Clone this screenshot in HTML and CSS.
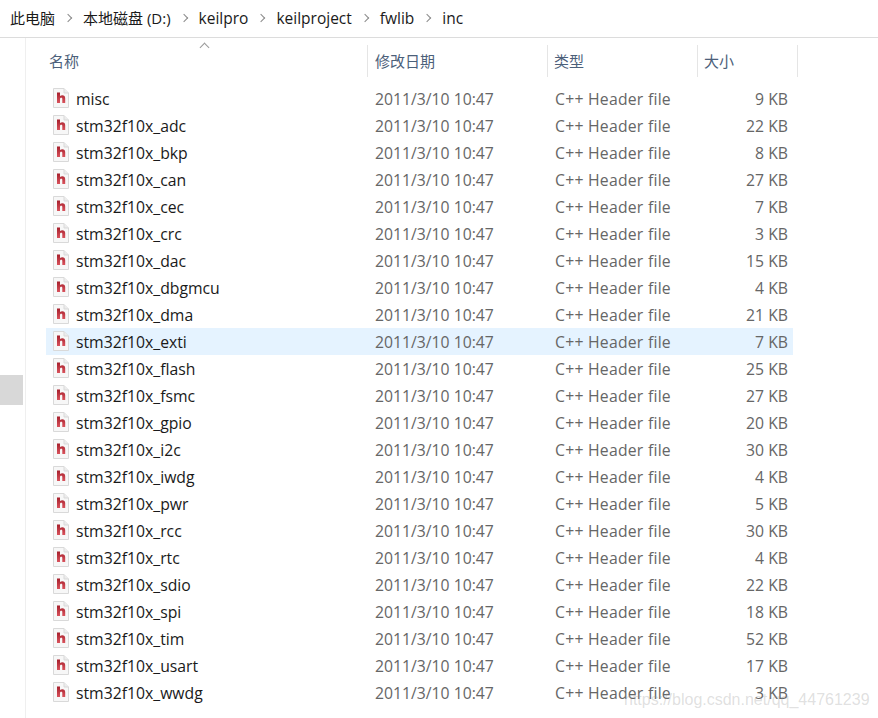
FILE: index.html
```html
<!DOCTYPE html>
<html lang="zh-CN">
<head>
    <meta charset="UTF-8">
    <title>inc</title>
    <link rel="stylesheet" href="styles.css">
</head>
<body>
    <svg class="defs" width="0" height="0">
        <defs>
            <linearGradient id="h-red" x1="0" y1="0" x2="0" y2="1">
                <stop offset="0" stop-color="#a51f2b"/>
                <stop offset="1" stop-color="#d9525c"/>
            </linearGradient>
        </defs>
        <symbol id="h-file" viewBox="0 0 16 20">
            <path d="M.5.5H11L15.5 5V19.5H.5Z" fill="#f7f7f7" stroke="#d9d9d9"/>
            <path d="M11 .5V5H15.5" fill="#ececec" stroke="#d9d9d9"/>
            <path d="M4 4.5H7V8C7.7 7.5 8.4 7.2 9.3 7.2 11.2 7.2 12.2 8.4 12.2 10.3V15H9.3V11C9.3 10.2 9 9.8 8.3 9.8 7.6 9.8 7 10.3 7 11.1V15H4Z" fill="url(#h-red)"/>
        </symbol>
    </svg>

    <nav class="breadcrumb">
        <span class="crumb crumb-cjk">此电脑</span><span class="chev"></span>
        <span class="crumb crumb-cjk">本地磁盘 (D:)</span><span class="chev"></span>
        <span class="crumb">keilpro</span><span class="chev"></span>
        <span class="crumb">keilproject</span><span class="chev"></span>
        <span class="crumb">fwlib</span><span class="chev"></span>
        <span class="crumb">inc</span>
    </nav>

    <div class="main">
        <div class="nav-pane"><div class="thumb"></div></div>
        <div class="files">
            <div class="head">
                <div class="col col-name">名称<span class="sort"></span></div>
                <div class="col col-date">修改日期</div>
                <div class="col col-type">类型</div>
                <div class="col col-size">大小</div>
            </div>
            <div class="rows">
                <div class="row"><svg class="icon"><use href="#h-file"/></svg><span class="name">misc</span><span class="date">2011/3/10 10:47</span><span class="type">C++ Header file</span><span class="size">9 KB</span></div>
                <div class="row"><svg class="icon"><use href="#h-file"/></svg><span class="name">stm32f10x_adc</span><span class="date">2011/3/10 10:47</span><span class="type">C++ Header file</span><span class="size">22 KB</span></div>
                <div class="row"><svg class="icon"><use href="#h-file"/></svg><span class="name">stm32f10x_bkp</span><span class="date">2011/3/10 10:47</span><span class="type">C++ Header file</span><span class="size">8 KB</span></div>
                <div class="row"><svg class="icon"><use href="#h-file"/></svg><span class="name">stm32f10x_can</span><span class="date">2011/3/10 10:47</span><span class="type">C++ Header file</span><span class="size">27 KB</span></div>
                <div class="row"><svg class="icon"><use href="#h-file"/></svg><span class="name">stm32f10x_cec</span><span class="date">2011/3/10 10:47</span><span class="type">C++ Header file</span><span class="size">7 KB</span></div>
                <div class="row"><svg class="icon"><use href="#h-file"/></svg><span class="name">stm32f10x_crc</span><span class="date">2011/3/10 10:47</span><span class="type">C++ Header file</span><span class="size">3 KB</span></div>
                <div class="row"><svg class="icon"><use href="#h-file"/></svg><span class="name">stm32f10x_dac</span><span class="date">2011/3/10 10:47</span><span class="type">C++ Header file</span><span class="size">15 KB</span></div>
                <div class="row"><svg class="icon"><use href="#h-file"/></svg><span class="name">stm32f10x_dbgmcu</span><span class="date">2011/3/10 10:47</span><span class="type">C++ Header file</span><span class="size">4 KB</span></div>
                <div class="row"><svg class="icon"><use href="#h-file"/></svg><span class="name">stm32f10x_dma</span><span class="date">2011/3/10 10:47</span><span class="type">C++ Header file</span><span class="size">21 KB</span></div>
                <div class="row hover"><svg class="icon"><use href="#h-file"/></svg><span class="name">stm32f10x_exti</span><span class="date">2011/3/10 10:47</span><span class="type">C++ Header file</span><span class="size">7 KB</span></div>
                <div class="row"><svg class="icon"><use href="#h-file"/></svg><span class="name">stm32f10x_flash</span><span class="date">2011/3/10 10:47</span><span class="type">C++ Header file</span><span class="size">25 KB</span></div>
                <div class="row"><svg class="icon"><use href="#h-file"/></svg><span class="name">stm32f10x_fsmc</span><span class="date">2011/3/10 10:47</span><span class="type">C++ Header file</span><span class="size">27 KB</span></div>
                <div class="row"><svg class="icon"><use href="#h-file"/></svg><span class="name">stm32f10x_gpio</span><span class="date">2011/3/10 10:47</span><span class="type">C++ Header file</span><span class="size">20 KB</span></div>
                <div class="row"><svg class="icon"><use href="#h-file"/></svg><span class="name">stm32f10x_i2c</span><span class="date">2011/3/10 10:47</span><span class="type">C++ Header file</span><span class="size">30 KB</span></div>
                <div class="row"><svg class="icon"><use href="#h-file"/></svg><span class="name">stm32f10x_iwdg</span><span class="date">2011/3/10 10:47</span><span class="type">C++ Header file</span><span class="size">4 KB</span></div>
                <div class="row"><svg class="icon"><use href="#h-file"/></svg><span class="name">stm32f10x_pwr</span><span class="date">2011/3/10 10:47</span><span class="type">C++ Header file</span><span class="size">5 KB</span></div>
                <div class="row"><svg class="icon"><use href="#h-file"/></svg><span class="name">stm32f10x_rcc</span><span class="date">2011/3/10 10:47</span><span class="type">C++ Header file</span><span class="size">30 KB</span></div>
                <div class="row"><svg class="icon"><use href="#h-file"/></svg><span class="name">stm32f10x_rtc</span><span class="date">2011/3/10 10:47</span><span class="type">C++ Header file</span><span class="size">4 KB</span></div>
                <div class="row"><svg class="icon"><use href="#h-file"/></svg><span class="name">stm32f10x_sdio</span><span class="date">2011/3/10 10:47</span><span class="type">C++ Header file</span><span class="size">22 KB</span></div>
                <div class="row"><svg class="icon"><use href="#h-file"/></svg><span class="name">stm32f10x_spi</span><span class="date">2011/3/10 10:47</span><span class="type">C++ Header file</span><span class="size">18 KB</span></div>
                <div class="row"><svg class="icon"><use href="#h-file"/></svg><span class="name">stm32f10x_tim</span><span class="date">2011/3/10 10:47</span><span class="type">C++ Header file</span><span class="size">52 KB</span></div>
                <div class="row"><svg class="icon"><use href="#h-file"/></svg><span class="name">stm32f10x_usart</span><span class="date">2011/3/10 10:47</span><span class="type">C++ Header file</span><span class="size">17 KB</span></div>
                <div class="row"><svg class="icon"><use href="#h-file"/></svg><span class="name">stm32f10x_wwdg</span><span class="date">2011/3/10 10:47</span><span class="type">C++ Header file</span><span class="size">3 KB</span></div>
            </div>
        </div>
    </div>

    <div class="watermark">https://blog.csdn.net/qq_44761239</div>
</body>
</html>
```

FILE: styles.css
```css
* {
    box-sizing: border-box;
}
html, body {
    height: 100%;
}
body {
    margin: 0;
    overflow: hidden;
    background-color: #fff;
    font-family: "Open Sans", "Noto Sans CJK SC", sans-serif;
    font-size: 15.75px;
    color: #1a1a1a;
    position: relative;
}
.defs {
    display: block;
}

/* address bar */
.breadcrumb {
    height: 38px;
    padding: 0 0 2px 10px;
    border-bottom: 1px solid #dcdcdc;
    display: flex;
    align-items: center;
    font-size: 15.5px;
}
.crumb {
    white-space: nowrap;
}
.crumb-cjk {
    font-size: 15px;
}
.chev {
    width: 6px;
    height: 6px;
    margin: 0 12px 0 10px;
    border-top: 1.5px solid #8a8a8a;
    border-right: 1.5px solid #8a8a8a;
    transform: rotate(45deg);
}

.main {
    display: flex;
    height: 680px;
}
.nav-pane {
    width: 26px;
    flex-shrink: 0;
    border-right: 1px solid #efefef;
    padding-top: 337px;
}
.thumb {
    width: 23px;
    height: 30px;
    background-color: #d8d8d8;
}
.files {
    flex: 1;
    padding-left: 20px;
}

/* column headers */
.head {
    display: flex;
    height: 32px;
    margin-top: 7px;
    color: #4c607a;
    font-size: 15px;
}
.col {
    height: 32px;
    line-height: 32px;
    border-right: 1px solid #e5e5e5;
    position: relative;
}
.col-name {
    width: 322px;
    padding-left: 3px;
}
.col-date {
    width: 180px;
    padding-left: 7px;
}
.col-type {
    width: 150px;
    padding-left: 6px;
}
.col-size {
    width: 100px;
    padding-left: 6px;
}
.sort {
    position: absolute;
    left: 155px;
    top: -1px;
    width: 7px;
    height: 7px;
    border-top: 1px solid #9a9a9a;
    border-left: 1px solid #9a9a9a;
    transform: rotate(45deg);
}

/* file rows */
.rows {
    margin-top: 8px;
    width: 747px;
}
.row {
    display: flex;
    align-items: center;
    height: 27px;
    padding-left: 7px;
    color: #666;
}
.row.hover {
    background-color: #e5f3ff;
}
.icon {
    width: 16px;
    height: 20px;
    flex-shrink: 0;
    margin: -2px 7px 0 0;
}
.name {
    width: 299px;
    color: #1a1a1a;
}
.date {
    width: 180px;
}
.type {
    width: 150px;
    letter-spacing: 0.24px;
}
.size {
    width: 83px;
    text-align: right;
}

.watermark {
    position: absolute;
    left: 624px;
    top: 691px;
    font-family: "Liberation Sans", sans-serif;
    font-size: 16px;
    color: rgba(150, 150, 150, 0.3);
    white-space: nowrap;
}
```
